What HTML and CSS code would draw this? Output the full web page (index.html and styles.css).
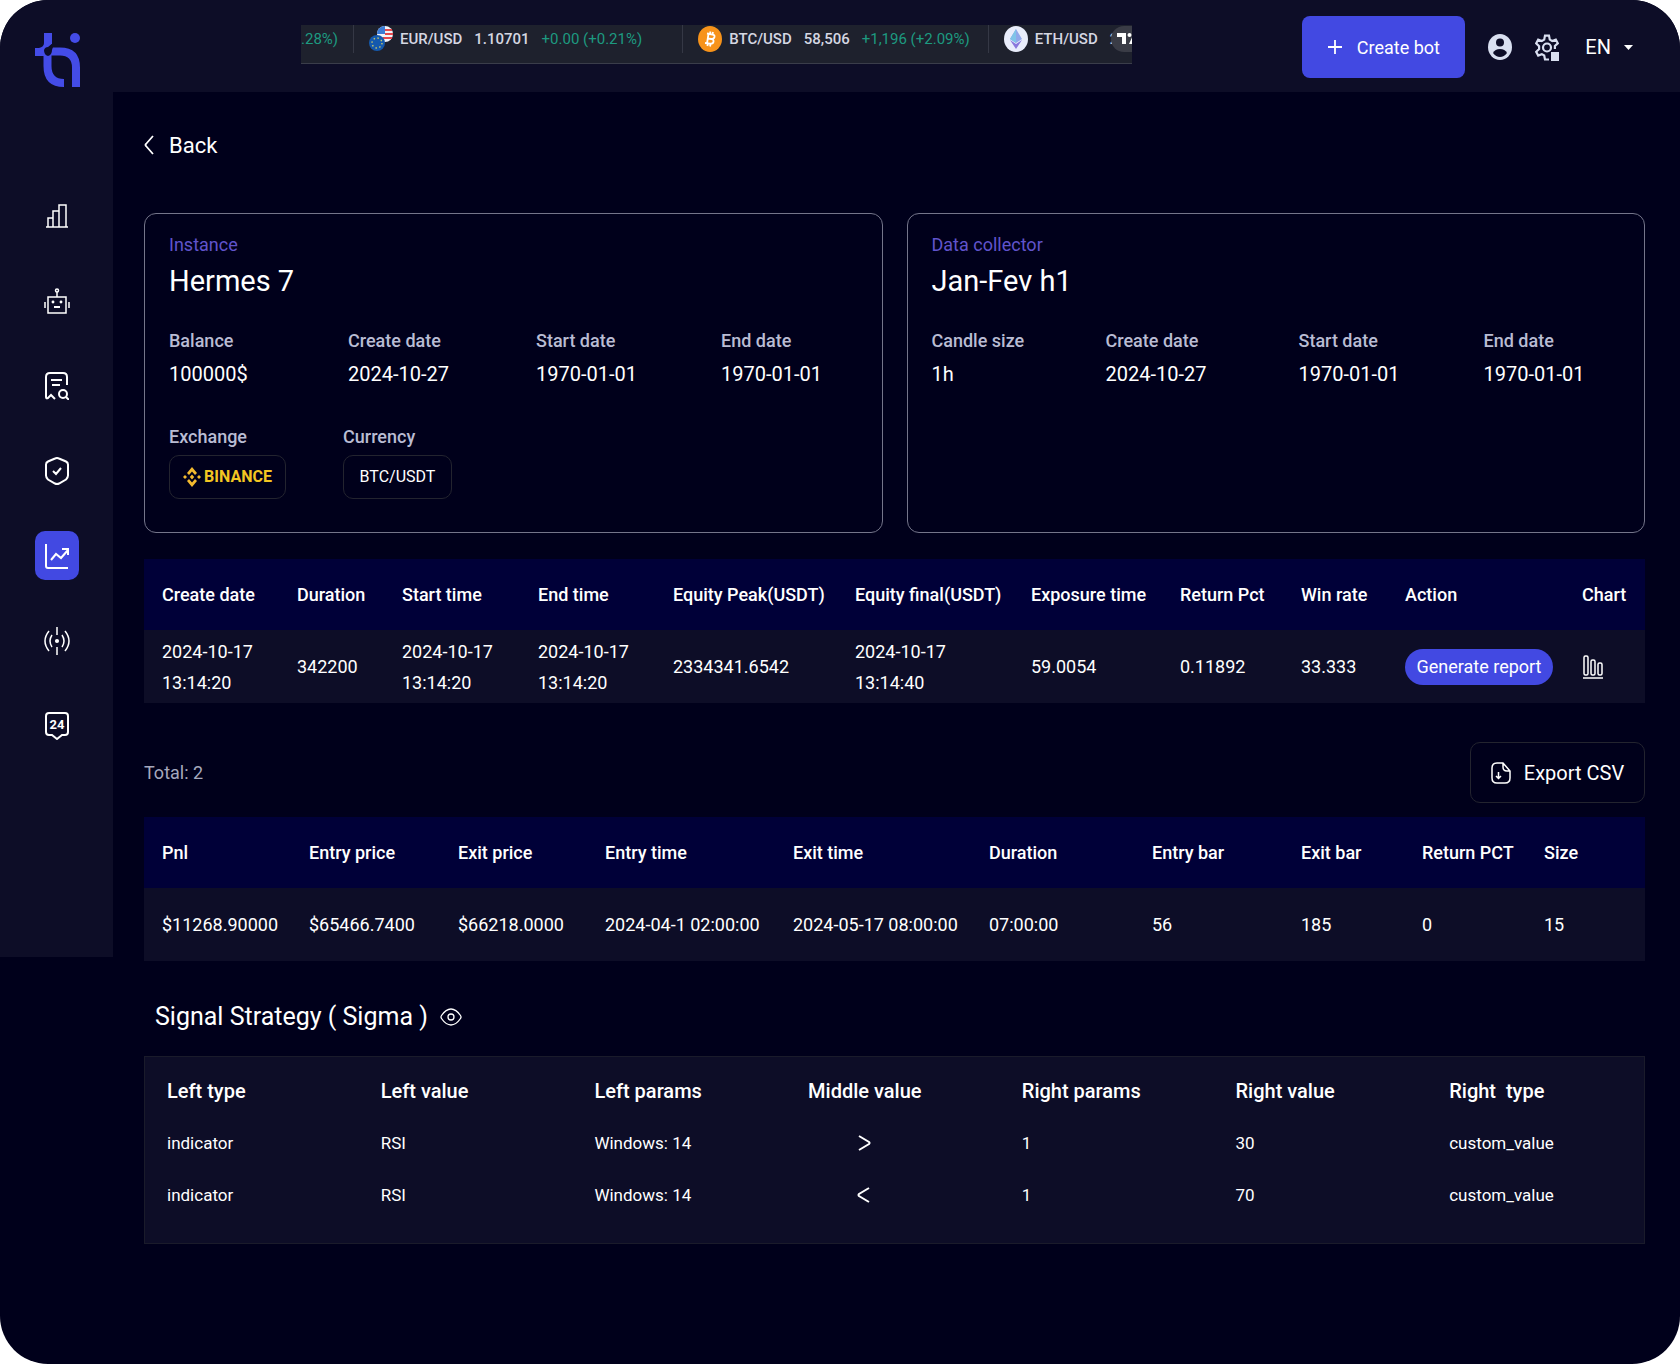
FILE: index.html
```html
<!DOCTYPE html>
<html lang="en">
<head>
  <meta charset="UTF-8">
  <meta name="viewport" content="width=device-width, initial-scale=1.0">
  <title>Backtest result</title>
  <link rel="stylesheet" href="styles.css">
</head>
<body>
  <div class="app">
    <header class="topbar">
      <a href="#" class="logo" aria-label="Home">
        <svg width="46" height="56" viewBox="0 0 46 56">
          <path fill="none" stroke="#444ce7" stroke-width="8" d="M15 19.500h10q16 0 16 16V55M12.500 20v14q0 17 16.500 17"/>
          <path fill="#444ce7" d="M9 1h8v11l-4 4-4 8H0v-8h4q5-1 5-5z"/>
          <path fill="#0d0d27" d="M9 18q1-3 4-3l5-4v4l-1 3q0 5-4 6-4-1-4-6z"/>
          <circle cx="40" cy="6" r="5" fill="#444ce7"/>
        </svg>
      </a>

      <div class="ticker">
        <div class="tick tick-first"><span class="up">.28%)</span></div>
        <div class="tick">
          <svg width="24" height="26" viewBox="0 0 24 26">
            <circle cx="16" cy="8" r="8" fill="#f1f3fa"/>
            <path d="M16 4h7M16 8h8M14 12h9" stroke="#e5484d" stroke-width="2"/>
            <path d="M16 0v8H8a8 8 0 0 1 8-8z" fill="#3c7bd6"/>
            <circle cx="8" cy="17" r="8" fill="#1459ad"/>
            <circle cx="8" cy="17" r="5" fill="none" stroke="#c8c96b" stroke-width="1.4" stroke-dasharray="1.4 2.5"/>
          </svg>
          <b>EUR/USD</b><b class="price">1.10701</b><span class="up">+0.00 (+0.21%)</span>
        </div>
        <div class="tick tick-btc">
          <svg width="24" height="26" viewBox="0 0 24 26">
            <ellipse cx="12" cy="13" rx="12" ry="13" fill="#f7931a"/>
            <path d="M9 7.500l5.500 1q2.500.500 2 2.500-.5 2-3 2 2.500.500 2 2.800-.5 2.200-3.500 1.900l-5-.7M10.500 8L9 17.500M9.500 12.500l4 .5M12.500 5.500L12 8M15 6l-.5 2.500M9.800 17.500l-.4 2.500M12.500 18l-.4 2.500" fill="none" stroke="#fff" stroke-width="1.800"/>
          </svg>
          <b>BTC/USD</b><b class="price">58,506</b><span class="up">+1,196 (+2.09%)</span>
        </div>
        <div class="tick">
          <svg width="24" height="26" viewBox="0 0 24 26">
            <ellipse cx="12" cy="13" rx="12" ry="13" fill="#e9edfb"/>
            <path d="M12 3l6 10-6 4-6-4z" fill="#8fa8ea"/>
            <path d="M12 3v14l-6-4z" fill="#7fc4e8"/>
            <path d="M6 14l6 4 6-4-6 9z" fill="#8a78dd"/>
          </svg>
          <b>ETH/USD</b><b class="price">2</b>
        </div>
        <span class="ticker-brand">
          <svg width="22" height="12" viewBox="0 0 22 12" fill="#fff"><path d="M0 0h9v11H5V4H0zM17 0h5l-5 11h-5z"/><circle cx="12.500" cy="2" r="2"/></svg>
        </span>
      </div>

      <div class="actions">
        <button class="create-btn">
          <svg width="14" height="16" viewBox="0 0 14 16"><path d="M7 1v14M0 8h14" stroke="#fff" stroke-width="1.800"/></svg>
          Create bot
        </button>
        <button class="icon-btn" aria-label="Account">
          <svg width="24" height="26" viewBox="0 0 24 26">
            <ellipse cx="12" cy="13" rx="12" ry="13" fill="#d9dff0"/>
            <circle cx="12" cy="8.500" r="4" fill="#0d0d27"/>
            <path d="M5 19q2-4 7-4t7 4q-3 4-7 4t-7-4z" fill="#0d0d27"/>
          </svg>
        </button>
        <button class="icon-btn" aria-label="Settings">
          <svg width="24" height="27" viewBox="0 0 24 27">
            <g fill="none" stroke="#d9dff0" stroke-width="2.200">
              <path d="M14 25.500h-4l-.8-4-2.400-1.400-3.600 1.400-2-3.700 2.900-2.700v-3L1.200 9.300l2-3.700L6.800 7l2.400-1.400.8-4h4l.8 4L17.200 7l3.600-1.400 2 3.700-2.900 2.700v3"/>
              <circle cx="12" cy="13.500" r="4"/>
            </g>
            <path d="M16 18h8v9h-8z" fill="#d9dff0"/>
          </svg>
        </button>
        <button class="lang">EN
          <svg width="9" height="5" viewBox="0 0 9 5"><path d="M0 0h9L4.500 5z" fill="#fff"/></svg>
        </button>
      </div>
    </header>

    <div class="layout">
      <nav class="sidebar">
        <a href="#" aria-label="Statistics">
          <svg width="24" height="24" viewBox="0 0 24 24"><path d="M1 23h22M3 23v-9h5v9M8 14V7h6v16M14 7V1h7v22"/></svg>
        </a>
        <a href="#" aria-label="Bots">
          <svg width="26" height="26" viewBox="0 0 26 26"><path d="M4 9h18v16H4zM13 9V4M1 14v6M25 14v6"/><path d="M10 19h6" stroke-width="2"/><circle cx="13" cy="2.500" r="1.500"/><circle cx="9" cy="14" r=".7"/><circle cx="17" cy="14" r=".7"/></svg>
        </a>
        <a href="#" aria-label="Research">
          <svg class="thick" width="24" height="28" viewBox="0 0 24 28"><path d="M22 13V5q0-4-4-4H5Q1 1 1 5v20q0 2 2 1l3-3 3 3 1 1M6 8h11M7 13h8"/><circle cx="18" cy="22" r="4"/><path d="M21 25l3 3"/></svg>
        </a>
        <a href="#" aria-label="Security">
          <svg class="thick" width="24" height="28" viewBox="0 0 24 28"><path d="M14 1.500l7 3q2 1 2 3v11q0 2-2 4l-7 4q-2 1-4 0l-7-4q-2-2-2-4v-11q0-2 2-3l7-3q2-1 4 0zM8 14l3 3 5-6"/></svg>
        </a>
        <a href="#" class="active" aria-label="Backtest">
          <svg class="thick" width="24" height="26" viewBox="0 0 24 26"><path d="M1 1v22q0 2 2 2h20M6 17l5-6 5 4 7-8M17 6h6v6"/></svg>
        </a>
        <a href="#" aria-label="Signals">
          <svg width="26" height="28" viewBox="0 0 26 28"><path d="M13 0v8M13 20v8M8 8q-4 6 0 12M18 8q4 6 0 12M5 4q-8 10 0 20M21 4q8 10 0 20"/><circle cx="13" cy="14" r="1.300" fill="#fff"/></svg>
        </a>
        <a href="#" aria-label="Support">
          <svg class="thick" width="24" height="28" viewBox="0 0 24 28"><path d="M4 1h16q3 0 3 3v16q0 3-3 3h-3l-5 4-5-4H4q-3 0-3-3V4q0-3 3-3z"/><text x="12" y="17">24</text></svg>
        </a>
      </nav>

      <main class="content">
        <a href="#" class="back">
          <svg width="10" height="20" viewBox="0 0 10 20"><path d="M9 1L2 9q-1 1 0 2l7 8" fill="none" stroke="#fff" stroke-width="1.800"/></svg>
          Back
        </a>

        <div class="cards">
          <section class="card">
            <p class="card-type">Instance</p>
            <h1>Hermes 7</h1>
            <dl class="facts">
              <div><dt>Balance</dt><dd>100000$</dd></div>
              <div><dt>Create date</dt><dd>2024-10-27</dd></div>
              <div><dt>Start date</dt><dd>1970-01-01</dd></div>
              <div><dt>End date</dt><dd>1970-01-01</dd></div>
            </dl>
            <dl class="markets">
              <div>
                <dt>Exchange</dt>
                <dd class="chip binance">
                  <svg width="18" height="20" viewBox="0 0 18 20" fill="#f3ba2f"><path d="M9 0l5 6-2 2-3-3.500L6 8 4 6zM9 20l-5-6 2-2 3 3.500 3-3.500 2 2zM9 7.500l2.200 2.500L9 12.500 6.800 10zM2 8l2 2-2 2-2-2zM16 8l2 2-2 2-2-2z"/></svg>
                  BINANCE
                </dd>
              </div>
              <div><dt>Currency</dt><dd class="chip">BTC/USDT</dd></div>
            </dl>
          </section>

          <section class="card">
            <p class="card-type">Data collector</p>
            <h1>Jan-Fev h1</h1>
            <dl class="facts facts-collector">
              <div><dt>Candle size</dt><dd>1h</dd></div>
              <div><dt>Create date</dt><dd>2024-10-27</dd></div>
              <div><dt>Start date</dt><dd>1970-01-01</dd></div>
              <div><dt>End date</dt><dd>1970-01-01</dd></div>
            </dl>
          </section>
        </div>

        <table class="data-table results">
          <colgroup><col><col><col><col><col><col><col><col><col><col><col></colgroup>
          <thead>
            <tr>
              <th>Create date</th>
              <th>Duration</th>
              <th>Start time</th>
              <th>End time</th>
              <th>Equity Peak(USDT)</th>
              <th>Equity final(USDT)</th>
              <th>Exposure time</th>
              <th>Return Pct</th>
              <th>Win rate</th>
              <th>Action</th>
              <th>Chart</th>
            </tr>
          </thead>
          <tbody>
            <tr>
              <td>2024-10-17<br>13:14:20</td>
              <td>342200</td>
              <td>2024-10-17<br>13:14:20</td>
              <td>2024-10-17<br>13:14:20</td>
              <td>2334341.6542</td>
              <td>2024-10-17<br>13:14:40</td>
              <td>59.0054</td>
              <td>0.11892</td>
              <td>33.333</td>
              <td><button class="report-btn">Generate report</button></td>
              <td>
                <button class="chart-btn" aria-label="Chart">
                  <svg width="22" height="24" viewBox="0 0 22 24" fill="none" stroke="#fff" stroke-width="1.500"><rect x="2" y="1" width="4" height="19" rx="1.500"/><rect x="9" y="5" width="4" height="15" rx="1.500"/><rect x="16" y="8" width="4" height="12" rx="1.500"/><path d="M1 23h20"/></svg>
                </button>
              </td>
            </tr>
          </tbody>
        </table>

        <div class="toolbar">
          <p>Total: 2</p>
          <button class="export-btn">
            <svg width="20" height="22" viewBox="0 0 20 22" fill="none" stroke="#fff" stroke-width="1.500"><path d="M12 1H6Q1 1 1 6v10q0 5 5 5h8q5 0 5-5V9zM12 1v4q0 4 4 4h3M7.500 10v6M5 14l2.500 2.500L10 14"/></svg>
            Export CSV
          </button>
        </div>

        <table class="data-table trades">
          <colgroup><col><col><col><col><col><col><col><col><col><col></colgroup>
          <thead>
            <tr>
              <th>Pnl</th>
              <th>Entry price</th>
              <th>Exit price</th>
              <th>Entry time</th>
              <th>Exit time</th>
              <th>Duration</th>
              <th>Entry bar</th>
              <th>Exit bar</th>
              <th>Return PCT</th>
              <th>Size</th>
            </tr>
          </thead>
          <tbody>
            <tr>
              <td>$11268.90000</td>
              <td>$65466.7400</td>
              <td>$66218.0000</td>
              <td>2024-04-1 02:00:00</td>
              <td>2024-05-17 08:00:00</td>
              <td>07:00:00</td>
              <td>56</td>
              <td>185</td>
              <td>0</td>
              <td>15</td>
            </tr>
          </tbody>
        </table>

        <h2>
          Signal Strategy ( Sigma )
          <svg width="22" height="18" viewBox="0 0 22 18" fill="none" stroke="#fff" stroke-width="1.300"><path d="M1.500 7.500Q6 1 11 1t9.500 6.500q1 1.500 0 3Q16 17 11 17T1.500 10.500q-1-1.500 0-3z"/><circle cx="11" cy="9" r="3"/></svg>
        </h2>

        <div class="strategy">
          <table>
            <thead>
              <tr>
                <th>Left type</th>
                <th>Left value</th>
                <th>Left params</th>
                <th>Middle value</th>
                <th>Right params</th>
                <th>Right value</th>
                <th>Right &nbsp;type</th>
              </tr>
            </thead>
            <tbody>
              <tr>
                <td>indicator</td>
                <td>RSI</td>
                <td>Windows: 14</td>
                <td class="operator">
                  <svg width="14" height="16" viewBox="0 0 14 16" role="img" aria-label="greater than"><path d="M2 1l10 6q1 1 0 2L2 15"/></svg>
                </td>
                <td>1</td>
                <td>30</td>
                <td>custom_value</td>
              </tr>
              <tr>
                <td>indicator</td>
                <td>RSI</td>
                <td>Windows: 14</td>
                <td class="operator">
                  <svg width="14" height="16" viewBox="0 0 14 16" role="img" aria-label="less than"><path d="M12 1L2 7q-1 1 0 2l10 6"/></svg>
                </td>
                <td>1</td>
                <td>70</td>
                <td>custom_value</td>
              </tr>
            </tbody>
          </table>
        </div>
      </main>
    </div>
  </div>
</body>
</html>
```
FILE: styles.css
```css
:root {
  --bg-color: #00001b;
  --panel-color: #0d0d27;
  --head-color: #000038;
  --primary-color: #4249e2;
  --muted-color: #b9bcd3;
  --line-color: #23242f;
}

* {
  box-sizing: border-box;
}

body {
  margin: 0;
  background-color: #fff;
  color: #fff;
  font-family: Roboto, "Liberation Sans", sans-serif;
  font-size: 18px;
}

h1, h2, p, dl, dd {
  margin: 0;
  font-weight: 400;
}

a {
  color: inherit;
  text-decoration: none;
}

button {
  padding: 0;
  border: none;
  background: none;
  color: inherit;
  font: inherit;
  cursor: pointer;
}

svg {
  display: block;
  flex-shrink: 0;
}

.app {
  min-height: 100vh;
  background-color: var(--bg-color);
  border-radius: 48px;
  overflow: hidden;
}

/* top bar */
.topbar {
  display: flex;
  align-items: flex-start;
  height: 92px;
  background-color: var(--panel-color);
}

.logo {
  width: 301px;
  padding: 32px 0 0 35px;
}

.ticker {
  position: relative;
  display: flex;
  flex: 0 1 831px;
  height: 39px;
  margin-top: 25px;
  background-color: #1e212d;
  border-bottom: 1px solid #3a3d4a;
  overflow: hidden;
  white-space: nowrap;
  color: #d5d7e2;
  font-size: 15px;
}

.tick {
  display: flex;
  flex-shrink: 0;
  align-items: center;
  height: 28px;
  padding: 0 40px 0 15px;
  border-left: 1px solid #353845;
}

.tick-first {
  width: 52px;
  padding: 0;
  border: none;
}

.tick-btc {
  padding-right: 18px;
}

.tick b {
  margin-left: 7px;
  font-weight: 500;
}

.tick .price {
  margin: 0 12px;
}

.up {
  color: #1d9a80;
}

.ticker-brand {
  position: absolute;
  top: 1px;
  right: -13px;
  display: flex;
  align-items: center;
  width: 34px;
  height: 26px;
  padding-left: 6px;
  border-radius: 13px;
  background-color: #3a3c46;
}

.actions {
  display: flex;
  align-items: center;
  gap: 23px;
  margin-left: auto;
  padding: 16px 47px 0 0;
}

.create-btn {
  display: flex;
  align-items: center;
  justify-content: center;
  gap: 15px;
  width: 163px;
  height: 62px;
  border-radius: 8px;
  background-color: var(--primary-color);
}

.lang {
  display: flex;
  align-items: center;
  gap: 13px;
  margin-left: 3px;
  font-size: 20px;
}

/* sidebar */
.layout {
  display: flex;
  align-items: flex-start;
}

.sidebar {
  display: flex;
  flex-direction: column;
  align-items: center;
  gap: 36px;
  flex: 0 0 113px;
  height: 865px;
  padding-top: 99px;
  background-color: var(--panel-color);
}

.sidebar a {
  display: flex;
  align-items: center;
  justify-content: center;
  width: 44px;
  height: 49px;
  border-radius: 10px;
}

.sidebar .active {
  background-color: var(--primary-color);
}

.sidebar svg {
  fill: none;
  stroke: #fff;
  stroke-width: 1.5;
}

.sidebar .thick {
  stroke-width: 2;
}

.sidebar text {
  fill: #fff;
  stroke: none;
  font-size: 13px;
  font-weight: 700;
  text-anchor: middle;
}

/* content */
.content {
  flex: 1;
  min-width: 0;
  padding: 38px 35px 48px 31px;
}

.back {
  display: inline-flex;
  align-items: center;
  gap: 15px;
  height: 30px;
  font-size: 22px;
}

.cards {
  display: grid;
  grid-template-columns: 1fr 1fr;
  gap: 24px;
  margin-top: 53px;
}

.card {
  min-height: 320px;
  padding: 19px 24px;
  border: 1px solid #74758a;
  border-radius: 12px;
}

.card-type {
  color: #6054cc;
  line-height: 24px;
}

.card h1 {
  margin-top: 4px;
  font-size: 29px;
  line-height: 40px;
}

.facts {
  display: grid;
  grid-template-columns: 179px 188px 185px 1fr;
  margin-top: 28px;
}

.facts-collector {
  grid-template-columns: 174px 193px 185px 1fr;
}

dt {
  color: var(--muted-color);
  font-weight: 500;
  line-height: 24px;
}

dd {
  margin-top: 6px;
  font-size: 20px;
  line-height: 30px;
}

.markets {
  display: flex;
  gap: 57px;
  margin-top: 36px;
}

.chip {
  display: flex;
  align-items: center;
  justify-content: center;
  gap: 3px;
  width: 109px;
  height: 44px;
  border: 1px solid var(--line-color);
  border-radius: 10px;
  font-size: 16px;
}

.binance {
  width: 117px;
  color: #f3c622;
  font-weight: 700;
}

table {
  width: 100%;
  table-layout: fixed;
  border-collapse: collapse;
  text-align: left;
  white-space: nowrap;
}

th {
  font-weight: 500;
}

.data-table {
  margin-top: 26px;
}

.data-table th,
.data-table td {
  padding: 0 0 0 18px;
  line-height: 31px;
}

.data-table th {
  height: 71px;
  background-color: var(--head-color);
}

.data-table td {
  height: 73px;
  background-color: var(--panel-color);
}

.results col:nth-child(1) { width: 135px; }
.results col:nth-child(2) { width: 105px; }
.results col:nth-child(3) { width: 136px; }
.results col:nth-child(4) { width: 135px; }
.results col:nth-child(5) { width: 182px; }
.results col:nth-child(6) { width: 176px; }
.results col:nth-child(7) { width: 149px; }
.results col:nth-child(8) { width: 121px; }
.results col:nth-child(9) { width: 104px; }
.results col:nth-child(10) { width: 177px; }
.results col:nth-child(11) { width: 81px; }

.trades col:nth-child(1) { width: 147px; }
.trades col:nth-child(2) { width: 149px; }
.trades col:nth-child(3) { width: 147px; }
.trades col:nth-child(4) { width: 188px; }
.trades col:nth-child(5) { width: 196px; }
.trades col:nth-child(6) { width: 163px; }
.trades col:nth-child(7) { width: 149px; }
.trades col:nth-child(8) { width: 121px; }
.trades col:nth-child(9) { width: 122px; }
.trades col:nth-child(10) { width: 119px; }

.report-btn {
  display: block;
  width: 148px;
  height: 36px;
  border-radius: 18px;
  background-color: var(--primary-color);
}

.chart-btn {
  display: block;
}

.toolbar {
  display: flex;
  align-items: center;
  justify-content: space-between;
  margin-top: 39px;
  color: #a5a8bd;
}

.export-btn {
  display: flex;
  align-items: center;
  justify-content: center;
  gap: 13px;
  width: 175px;
  height: 61px;
  border: 1px solid var(--line-color);
  border-radius: 10px;
  color: #fff;
  font-size: 20px;
}

.trades {
  margin-top: 14px;
}

h2 {
  display: flex;
  align-items: center;
  gap: 12px;
  margin-top: 38px;
  padding-left: 11px;
  font-size: 25px;
  line-height: 36px;
}

.strategy {
  margin-top: 21px;
  padding: 8px 3px 22px 0;
  border: 1px solid #1a1b2b;
  background-color: var(--panel-color);
}

.strategy th,
.strategy td {
  height: 52px;
  padding: 0 0 0 22px;
}

.strategy th {
  font-size: 20px;
}

.strategy td {
  font-size: 17px;
}

.strategy .operator {
  padding-left: 71px;
}

.operator svg {
  fill: none;
  stroke: #fff;
  stroke-width: 2;
}
```
